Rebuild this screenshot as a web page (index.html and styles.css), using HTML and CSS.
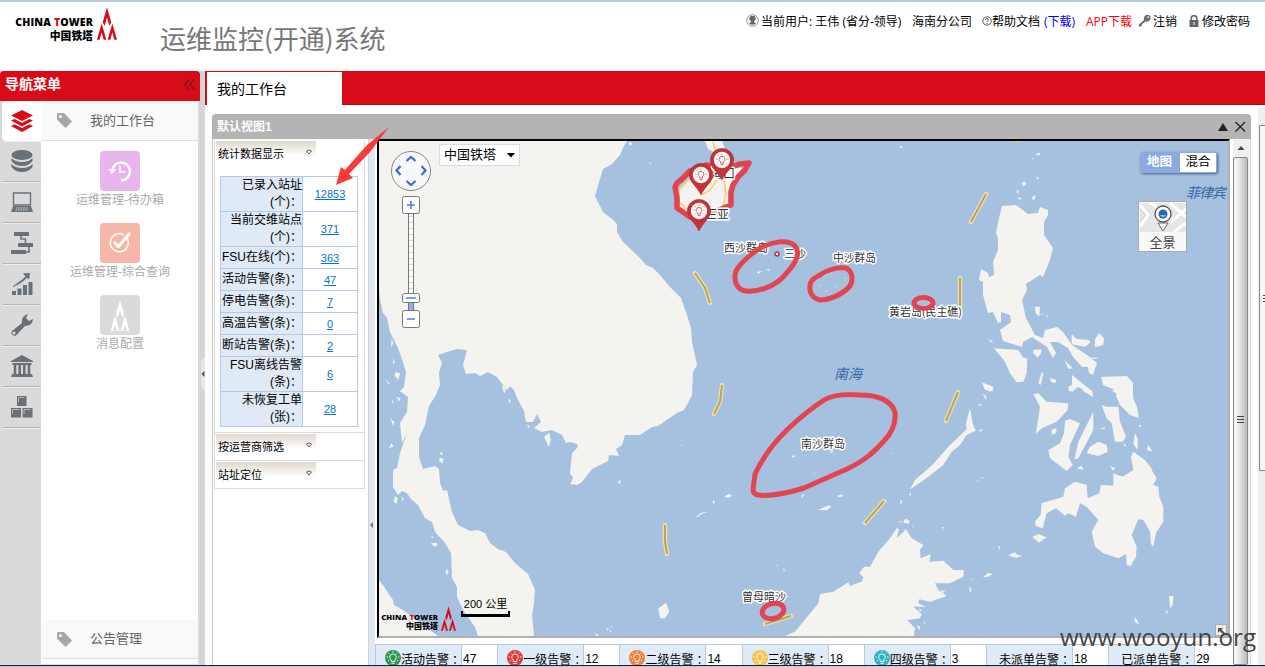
FILE: index.html
```html
<!DOCTYPE html>
<html lang="zh-CN">
<head>
<meta charset="utf-8">
<title>运维监控(开通)系统</title>
<link rel="stylesheet" href="styles.css">
</head>
<body>
<svg class="defs" width="0" height="0">
  <symbol id="tower" viewBox="0 0 60 98"><path d="M30 0 43 46 37 56 30 30 23 56 17 46ZM14 49 28 98H20L14 76 8 98H0ZM46 49 60 98H52L46 76 40 98H32Z"/></symbol>
  <symbol id="tag" viewBox="0 0 15 15"><path fill-rule="evenodd" d="M0 1.500Q0 0 1.500 0H7L15 8.500 8.500 15 0 6.500ZM3.500 2A1.500 1.500 0 1 0 3.500 5 1.500 1.500 0 0 0 3.500 2"/></symbol>
  <symbol id="bulb" viewBox="0 0 16 16"><g fill="none" stroke="currentColor" stroke-width=".9"><path d="M6.300 11.500V10Q4.700 8.800 4.700 7.200A3.300 3.300 0 0 1 11.300 7.200Q11.300 8.800 9.700 10V11.500ZM6.300 13.300H9.700"/><path d="M8 1V2.500M3.200 2.700 4.200 3.700M12.800 2.700 11.800 3.700M1.500 7H3M13 7H14.500M3 11 4 10.200M13 11 12 10.200"/></g></symbol>
  <symbol id="chev" viewBox="0 0 6 6"><path d="M.5 2Q3 0 5.500 2L3 5Z" fill="#fff" stroke="#333" stroke-width=".8"/></symbol>
  <symbol id="pin" viewBox="0 0 24 32"><path d="M12 32Q10.500 28 2.800 19A11.600 11.600 0 0 1 .4 12 11.600 11.600 0 0 1 23.600 12 11.600 11.600 0 0 1 21.200 19Q13.500 28 12 32" fill="#c83236" stroke="#a92529" stroke-width=".6"/><circle cx="12" cy="12" r="8.200" fill="#fff"/><use href="#bulb" x="5" y="5" width="14" height="14" color="#d33"/></symbol>
</svg>

<header class="top">
  <div class="logo">
    <div class="logo-text"><b class="logo-en">CHINA <i>T</i>OWER</b><b class="logo-cn">中国铁塔</b></div>
    <svg class="logo-mark"><use href="#tower"/></svg>
  </div>
  <h1 class="sys">运维监控(开通)系统</h1>
  <nav class="usernav">
    <svg width="13" height="13" viewBox="0 0 13 13"><circle cx="6.500" cy="6.500" r="5.800" fill="#fff" stroke="#8b9093"/><path d="M6.500 2A2.300 2.500 0 0 0 5 7V8L3 9.200Q6.500 12.500 10 9.200L8 8V7A2.300 2.500 0 0 0 6.500 2" fill="#60686c"/></svg>
    <span>当前用户: 王伟 (省分-领导)</span>
    <span>海南分公司</span>
    <svg width="10" height="10" viewBox="0 0 10 10"><circle cx="5" cy="5" r="4.200" fill="none" stroke="#555"/><path d="M3.500 4Q3.500 2.500 5 2.500T6.400 4Q6.400 4.600 5 5.400V6M5 7V8" fill="none" stroke="#555"/></svg>
    <span>帮助文档</span>
    <span class="blue">(下载)</span>
    <span class="red">APP下载</span>
    <svg width="13" height="13" viewBox="0 0 13 13"><path fill-rule="evenodd" d="M1 10.500 6 6Q5.200 3 7.500 1.200 10 -.2 12.200 2 13.500 5 11 7 9 8.200 7.300 7.500L6 9H5V10H4V11.500L2 12.800 .5 12ZM9.500 2.500V4H11V2.500Z" fill="#6c7174"/></svg>
    <span>注销</span>
    <svg width="10" height="12" viewBox="0 0 10 12"><path d="M2.200 6V3.500A2.800 2.800 0 0 1 7.800 3.500V6" fill="none" stroke="#5f686d" stroke-width="1.500"/><path fill-rule="evenodd" d="M.5 5H9.500V12H.5ZM4.500 7V10H5.500V7Z" fill="#5f686d"/></svg>
    <span>修改密码</span>
  </nav>
</header>

<div class="work">
  <aside class="side">
    <div class="side-title"><b>导航菜单</b><svg width="11" height="11" viewBox="0 0 11 11"><path d="M5.500 .5 .8 5.500 5.500 10.500M10.500 .5 5.800 5.500 10.500 10.500" fill="none" stroke="#6c1c20" stroke-width="1.100"/></svg></div>
    <div class="side-body">
      <ul class="rail">
        <li class="on"><svg viewBox="0 0 22 22"><path fill="#d80c18" d="M11 0 22 5.500 11 11 0 5.500ZM0 10.500 3.500 9 11 12.800 18.500 9 22 10.500 11 16.500ZM0 16 3.500 14.200 11 18 18.500 14.200 22 16 11 22Z"/></svg></li>
        <li><svg viewBox="0 0 22 22"><g fill="#687177"><ellipse cx="11" cy="5" rx="10.500" ry="5"/><path d="M.5 8Q4 12 11 12T21.500 8V11Q18 16 11 16T.5 11ZM.5 14Q4 18 11 18T21.500 14V17Q18 22 11 22T.5 17Z"/></g></svg></li>
        <li><svg viewBox="0 0 22 22"><path d="M2.500 2H19.500V14H2.500Z" fill="#dadada" stroke="#687177" stroke-width="1.400"/><path d="M2 15H20L22 21H0Z" fill="#687177"/><path d="M5 17H17M4.500 19H17.500" stroke="#dadada" stroke-dasharray="1.500 1"/></svg></li>
        <li><svg viewBox="0 0 22 22"><g fill="#687177"><rect x="3" width="15" height="4" rx=".5"/><rect x="7" y="11" width="15" height="4" rx=".5"/><rect y="18" width="15" height="4" rx=".5"/></g><path d="M10 4V7H14.500V11M18 15V20H14" fill="none" stroke="#687177" stroke-width="1.500"/></svg></li>
        <li><svg viewBox="0 0 22 22"><path fill="#687177" d="M1 18H5V22H1ZM6.500 15.500H10.500V22H6.500ZM12 12H16V22H12ZM17.500 9H21.500V22H17.500ZM2 13Q10 8 14.500 3.500L12 .5 19 0 18 6.500 16 4.800Q10 11 2 14Z"/></svg></li>
        <li><svg viewBox="0 0 22 22"><path fill="#687177" fill-rule="evenodd" d="M1 17 11 9Q10 2 17 0L15 4 18 7 22 5Q21.500 12 14 12L5 21.500Q2 22.500 .5 20 .3 18 1 17M3 17.500A1.500 1.500 0 1 0 3 20.500 1.500 1.500 0 0 0 3 17.500"/></svg></li>
        <li><svg viewBox="0 0 22 22"><path fill="#687177" d="M0 6 11 0 22 6V7H0ZM1.500 8H20.500V10H1.500ZM1 19H21L22 22H0Z"/><path d="M4 10V19M8.700 10V19M13.300 10V19M18 10V19" stroke="#687177" stroke-width="2.600"/></svg></li>
        <li><svg viewBox="0 0 22 22"><path fill="#687177" d="M6 0H15.500V10H6ZM0 12H10V21.500H0ZM11.500 12H21.500V21.500H11.500Z"/><path fill="none" stroke="#b3b9bc" d="M7.500 6V1.500H13.500M1.500 18V13.500H8M13 18V13.500H19.500"/></svg></li>
      </ul>
      <div class="menu">
        <div class="menu-head"><svg><use href="#tag"/></svg><span>我的工作台</span></div>
        <div class="menu-items">
          <a><svg class="tile violet" viewBox="0 0 40 40"><path d="M12 21A9 9 0 1 1 21 29.500" fill="none" stroke="#fff" stroke-width="2.400"/><path d="M8.500 18H16L12 23Z" fill="#fff"/><path d="M20 15V21H25" fill="none" stroke="#fff" stroke-width="1.600"/></svg><span>运维管理-待办箱</span></a>
          <a><svg class="tile salmon" viewBox="0 0 40 40"><path d="M27 15A9 9 0 1 1 24 12" fill="none" stroke="#fff" stroke-width="1.500"/><path d="M14 19 18.500 23.500 30 10" fill="none" stroke="#fff" stroke-width="3"/></svg><span>运维管理-综合查询</span></a>
          <a><svg class="tile gray" viewBox="0 0 40 40"><use href="#tower" x="10" y="5" width="20" height="31" fill="#fff"/></svg><span>消息配置</span></a>
        </div>
        <div class="menu-head foot"><svg><use href="#tag"/></svg><span>公告管理</span></div>
      </div>
    </div>
  </aside>
  <div class="split"><svg width="4" height="34" viewBox="0 0 4 34"><path d="M4 0 0 4V30L4 34Z" fill="#e6e6e6"/><path d="M3.500 14 .5 17 3.500 20Z" fill="#555"/></svg></div>

  <main class="content">
    <div class="tabs"><div class="tab">我的工作台</div></div>
    <div class="stage">
      <section class="panel">
        <div class="panel-head"><b>默认视图1</b><svg width="28" height="11" viewBox="0 0 28 11"><path d="M0 10 5 2 10 10Z" fill="#222"/><path d="M17.500 1 27 10.500M27 1 17.500 10.500" stroke="#222" stroke-width="1.300"/></svg></div>
        <div class="panel-body">
          <div class="stats">
            <div class="acc first"><div class="acc-head"><span>统计数据显示</span><svg><use href="#chev"/></svg></div>
              <table>
                <tr class="tall"><th>已录入站址<br>(个)<i>：</i></th><td><a>12853</a></td></tr>
                <tr class="tall"><th>当前交维站点<br>(个)<i>：</i></th><td><a>371</a></td></tr>
                <tr><th>FSU在线(个)<i>：</i></th><td><a>363</a></td></tr>
                <tr><th>活动告警(条)<i>：</i></th><td><a>47</a></td></tr>
                <tr><th>停电告警(条)<i>：</i></th><td><a>7</a></td></tr>
                <tr><th>高温告警(条)<i>：</i></th><td><a>0</a></td></tr>
                <tr><th>断站告警(条)<i>：</i></th><td><a>2</a></td></tr>
                <tr class="tall"><th>FSU离线告警<br>(条)<i>：</i></th><td><a>6</a></td></tr>
                <tr class="tall"><th>未恢复工单<br>(张)<i>：</i></th><td><a>28</a></td></tr>
              </table>
            </div>
            <div class="acc"><div class="acc-head"><span>按运营商筛选</span><svg><use href="#chev"/></svg></div></div>
            <div class="acc"><div class="acc-head"><span>站址定位</span><svg><use href="#chev"/></svg></div></div>
          </div>
          <div class="gutter"><svg width="5" height="8" viewBox="0 0 5 8"><path d="M4 1 1 4 4 7Z" fill="#777"/></svg></div>
          <div class="mapcol">
            <div class="map">
              <svg class="canvas" width="848" height="495" viewBox="379 141 848 495">
                <g class="land">
                  <path d="M379 141H627L623 148 620 155 612 164 603 169 599 182 595 196 603 212 612 219 617 224V232L623 242 640 258 646 265 653 268 659 274 670 287 681 298 687 315 691 328 692 342 697 365 693 372 692 395 688 403 684 410 677 413 658 426 652 427 640 435H625L622 445 616 449 619 456 609 455 608 461 592 469 582 482 577 485 570 484 573 478 570 473 572 453 578 447 577 444 570 442 566 443 562 435 552 430 542 432 534 428 541 422 537 414 533 422H526L524 411 518 400 514 390 510 386 507 390 497 377 488 372 480 376 475 373 466 374 463 365 467 350 457 349 447 352 438 355 442 363 439 373 440 385 436 395 429 406 425 425 419 438V457L423 469 435 466 439 469 440 483 443 491 447 490 452 512 458 525 470 531 478 530 485 533 490 543 498 549 506 552 515 563 528 574 535 590 534 603 532 615 534 636H478L475 627 463 610 457 597V587L452 578 451 553 445 543 435 532 432 522 425 518 418 505 411 499 407 493 402 491 398 495 393 487V470L397 468 400 453 407 433 402 443 400 423 407 412 408 397 400 391 404 387 406 372 403 362 398 348 393 338 390 332 387 318 383 313 380 300 379 287Z"/>
                  <path d="M379 580 385 588 388 593 393 600 394 605 403 610 438 636H379ZM705 141 708 149 718 154H727L722 141Z"/>
                  <path d="M1002 206 1016 205 1028 214 1038 213 1040 207 1048 210V215L1044 222V235L1053 248 1050 260 1043 277 1040 275 1026 284 1027 290 1022 300 1026 318 1035 335 1043 338 1045 330 1057 327 1063 332 1072 345 1087 355 1097 363 1093 375 1089 373 1088 367H1082L1073 357 1068 348 1058 342H1050L1056 353 1053 358 1047 347 1032 337 1023 342 1022 347 1003 341 1000 330 1011 322 1010 315 1001 312V322L998 323 993 312 988 313 983 295V282L979 280 981 269 988 273 989 277 994 275 993 262 998 250V238L996 233 999 218Z"/>
                  <path d="M1101 377 1127 376 1133 383V398L1137 407 1139 418 1130 415 1120 405 1116 396 1118 391 1103 385ZM1072 375 1093 392 1090 393 1078 387 1072 392Z"/>
                  <g transform="translate(375 135) scale(.33333)"><path d="M765 20 772 25 767 32 760 26ZM823 82 829 85 825 88ZM50 610 55 625 48 638ZM55 670 60 685 54 685ZM62 710 75 715 70 735 58 722ZM30 730 45 747 40 747ZM380 750 392 760 388 775ZM1147 410 1163 408 1148 417ZM1173 402 1187 404 1180 408Z"/></g>
                  <g transform="translate(770 135) scale(.33333)"><path d="M385 38 396 32V38ZM792 20 799 25ZM795 60 808 52 810 60ZM787 70 792 70 790 76ZM755 145 763 139 769 147 760 154ZM798 126 807 129 803 134ZM740 163 747 170 741 176ZM742 188H755L750 195ZM790 182 798 182 792 196 785 190ZM795 515 810 515 808 545 797 535ZM813 535 820 540H815ZM827 540 837 545H830ZM655 610 670 622 662 622ZM905 598 920 612 957 615 962 622 945 635 905 628ZM988 595 1002 610 1000 630 975 637V612ZM672 640 745 645 760 668 772 670 770 715 760 740 740 742 720 715 705 680ZM790 645 815 643 813 655 803 668 790 655ZM883 675 908 700 895 702ZM815 712 820 715 812 750 805 745ZM840 728 860 735 855 745 842 740ZM635 742 670 755 668 768 645 764ZM895 755 905 750 908 765 897 770ZM940 667 985 668 978 672Z"/></g>
                  <g transform="translate(375 390) scale(.33333)"><path d="M65 20 77 25 72 35ZM50 25 56 40 52 40ZM45 85 58 95 55 108ZM50 160 55 170 42 175ZM195 185 206 192 198 196ZM195 203 206 207 202 220 192 212ZM60 318 68 325 65 342 56 335ZM80 318 87 330 82 333ZM170 438 175 442 170 447ZM168 460 185 458 188 465 178 470ZM215 537 221 545 216 555 211 547ZM507 140 523 128 527 150 522 172ZM400 25 408 35 402 38ZM383 0 393 0 388 8ZM456 105 464 107 461 115ZM728 275 738 270 735 282ZM917 165 923 165 921 168ZM1047 320 1062 311 1071 317 1060 323ZM1013 330 1020 335 1015 345ZM963 384Q975 363 1000 366 980 368 968 382ZM850 655 873 638 883 665 868 686 855 684ZM695 715 702 717 697 722ZM708 708 713 710 710 714ZM704 720 710 724 706 728ZM662 730 673 738H662Z"/></g>
                  <g transform="translate(770 390) scale(.33333)"><path d="M45 738 75 725 145 640 150 612 190 605 235 577 240 588 275 575 280 562 268 550 282 530 300 530 325 485 360 445 380 415 387 417 380 445 408 418 425 445 460 465 450 480 452 505 483 492 478 515 520 512 550 540 582 540 580 560 540 580 495 580 505 600 530 618 480 635 448 628 445 640 468 650 430 650 455 672 450 685 412 690 435 715 432 738ZM600 55 608 100 617 122 590 135 570 165 545 185 520 225 475 260 440 285 420 298 435 270 490 222 540 165 590 118 588 100Z"/>
                  <path d="M790 12 805 10 830 35 895 40 893 60 860 95 815 115 797 133 805 85 810 50ZM885 92 900 87 930 100 900 165 895 200 908 225 890 243 840 205 835 180 870 160 882 130ZM970 65V120L925 205 913 208 925 155ZM985 155 1010 165 1013 185 985 198 950 190 960 170ZM995 45 1010 50 1045 50 1050 95 1068 140 1058 155 1035 155 1025 100 1010 85ZM845 118 860 115 858 128 845 135ZM1095 130 1103 145 1103 180 1090 162ZM1135 165 1147 185 1130 180ZM1020 228 1035 235 1030 242ZM920 235 935 227 940 240ZM1105 105 1115 106 1110 112ZM1060 160 1068 165 1065 172ZM990 115 1005 112 1003 118Z"/>
                  <path d="M1090 185 1125 210 1145 235 1145 240 1160 265 1150 285 1165 290 1168 320 1180 350 1180 395 1158 428 1150 470 1143 462 1140 425 1120 390 1105 388 1085 435 1100 470 1098 500 1082 528 1070 525 1068 492 1045 505 1000 490 975 470 965 425 985 390 950 350 930 340 918 380 895 370 885 377 858 355 830 370 818 415 797 408 795 395 812 375 815 340 880 320 885 295 915 275 950 285 953 325 988 310 992 285 1030 287 1030 250 1058 260 1090 240 1083 200ZM787 440 805 432 830 442 807 458Z"/>
                  <path d="M715 495 735 487 743 495 757 497 740 503 725 500ZM685 472 692 466 687 480ZM633 567 655 548 668 552 655 560 640 562ZM597 587 605 600 600 608ZM603 566 609 566 606 570ZM515 413 522 411 523 417ZM620 273 626 270 623 276ZM633 263 642 260 636 266ZM397 330 393 345 390 340 393 330ZM400 393 408 386 420 393 415 401 402 398ZM387 395 396 393 394 398ZM417 315 423 308 423 317ZM638 10 650 20 647 30ZM622 45 636 40 630 48ZM625 120 640 118 632 125ZM650 0H670L660 5ZM1025 0H1050V20ZM935 0H965L970 22ZM900 0 910 0 905 5ZM1197 618 1210 618 1208 645 1200 656ZM1186 658 1195 668 1190 672ZM1092 682 1100 688 1107 703 1095 697ZM143 360 175 346 185 350 170 361ZM202 318 215 313 221 319 205 322ZM95 315 105 312 95 325ZM65 198 77 196 70 204ZM180 185 195 182 182 190ZM130 250 135 248 133 252ZM361 188 368 189 364 191ZM440 705 452 712 447 720ZM430 405 432 414 428 410ZM18 525 23 528H18ZM38 535 45 540 42 545ZM510 600 525 603 520 610ZM448 655 456 662 448 664ZM462 695 467 697 462 702Z"/></g>
                </g>
                <path class="land" d="M676 194 681 186 692 175 705 168 728 168 742 168 738 177 729 193 728 203 718 209 705 213 690 215 680 208Z"/>
                <g fill="none" stroke="#fac74f" stroke-width="1.300"><path d="M679 190 689 179 701 170 723 169M679 190V202L689 211 704 214 722 209 726 195 724 178M713 141 716 155M702 195 710 190 719 177M1015 141.500H1019"/></g>
                <path d="M675 187 677 183 682 179 690 171 698 169 706 165 730 168 739 164 749 163 745 170 738 177 733 185 731 192 731 205 719 210 706 217 690 217 683 212 677 208 677 198Z" fill="none" stroke="#e04450" stroke-width="5.500" stroke-linejoin="round"/>
                <g fill="none" stroke="#efe1a2" stroke-width="4.400" stroke-linecap="round"><path id="dash" d="M695 273 705 288 710 303M722 385 720 402 714 414M665 525 665 541 667 554M765 624 791 616M865 523 884 501M946 421 958 392M960 278V306M971 222 986 194"/></g>
                <g fill="none" stroke="#b7a365" stroke-width="2"><use href="#dash"/></g>
                <g class="places"><text x="724" y="252" textLength="44">西沙群岛</text><text x="784" y="258" textLength="22">三沙</text><text x="833" y="262" textLength="43">中沙群岛</text><text x="889" y="316" textLength="73">黄岩岛(民主礁)</text><text x="801" y="448" textLength="44">南沙群岛</text><text x="742" y="601" textLength="44">曾母暗沙</text><text x="711" y="178" textLength="24" class="city">海口</text><text x="706" y="219" textLength="23" class="city">三亚</text></g>
                <g class="seas"><text x="834" y="379" textLength="28">南海</text><text x="1186" y="198" textLength="40">菲律宾</text></g>
                <g fill="#f5faff"><circle cx="818" cy="280" r=".6"/><circle cx="824" cy="276" r=".6"/><circle cx="831" cy="273" r=".6"/><circle cx="838" cy="272" r=".6"/><circle cx="845" cy="278" r=".6"/><circle cx="837" cy="287" r=".6"/><circle cx="826" cy="291" r=".6"/><circle cx="820" cy="286" r=".6"/></g>
                <g class="rings"><path d="M762 247C772 242 787 239 794 245 801 252 798 261 784 276 773 288 757 292 746 291 737 290 733 281 736 271 741 262 753 252 762 247Z"/><path d="M820 275C828 269 839 267 846 268 852 271 854 279 850 286 842 295 829 300 820 300 811 298 808 290 811 282 813 278 816 277 820 275Z"/><ellipse cx="923.500" cy="303" rx="9.500" ry="5.500"/><path d="M824 400C832 395 846 394 860 395 875 395 891 399 895 412 896 421 894 431 883 442 873 453 864 461 847 469L804 488C791 492 773 497 758 495 750 494 754 486 755 474 763 457 776 440 790 427 804 414 815 406 824 400Z"/><ellipse cx="773" cy="611" rx="11" ry="7.500" transform="rotate(-15 773 611)"/></g>
                <circle cx="777" cy="254" r="2" fill="#fff" stroke="#c9333d" stroke-width="1.500"/>
                <use href="#pin" x="710" y="148" width="24" height="32"/><use href="#pin" x="689" y="163" width="24" height="32"/><use href="#pin" x="687" y="199" width="24" height="32"/>
              </svg>
              <svg class="zoomer" width="44" height="184" viewBox="389 149 44 184">
                <circle cx="411" cy="171" r="19.500" fill="#f8f8f8" stroke="#85878a"/>
                <g fill="none" stroke="#3c6cd0" stroke-width="2.200"><path d="M406.500 161 411 157 415.500 161M406.500 181 411 185 415.500 181M400.500 166 396.500 170.500 400.500 175M421.500 166 425.500 170.500 421.500 175"/></g>
                <path d="M408.500 213V311M413.500 213V311" stroke="#777"/><path d="M411 213V293" stroke="#fff" stroke-width="4"/><path d="M411 216V293" stroke="#d5d5d5" stroke-width="4" stroke-dasharray="1 5"/><path d="M411 302V311" stroke="#93aff3" stroke-width="4"/>
                <g fill="#fff" stroke="#777"><rect x="402.500" y="196.500" width="17" height="17" rx="2"/><rect x="402.500" y="293.500" width="17" height="9" rx="2"/><rect x="402.500" y="310.500" width="17" height="17" rx="2"/></g>
                <path d="M407 205H415M411 201V209M406 298H416M407 319H415" stroke="#4f80e6" stroke-width="1.700"/>
              </svg>
              <div class="region">中国铁塔<svg width="8" height="5" viewBox="0 0 8 5"><path d="M0 0H8L4 4.500Z"/></svg></div>
              <div class="types"><b>地图</b><span>混合</span></div>
              <div class="pano"><svg width="46" height="29" viewBox="0 0 46 29"><path fill="#e6e6e6" d="M0 0H46V29H0Z"/><path d="M0 2 8 12 0 24M10 0 17 4M30 0 46 14M30 20 46 6M34 29 46 20" fill="none" stroke="#fff" stroke-width="3"/><path d="M0 6 6 12 0 18" fill="none" stroke="#ccc"/><path d="M18 20 23 28 28 20Z" fill="#fff" stroke="#666"/><circle cx="23" cy="11" r="8" fill="#fff" stroke="#555" stroke-width="1.300"/><circle cx="23" cy="11" r="4.500" fill="#2b66b5"/><path d="M20 12A3.200 3 0 0 0 26 12Z" fill="#85c4f2"/></svg><span>全景</span></div>
              <div class="logo mini"><div class="logo-text"><b class="logo-en">CHINA <i>T</i>OWER</b><b class="logo-cn">中国铁塔</b></div><svg class="logo-mark"><use href="#tower"/></svg></div>
              <div class="scale">200 公里</div>
              <div class="corner"><svg width="7" height="7" viewBox="0 0 7 7"><path d="M0 0H5L3.500 1.500 7 5 5.500 6.500 1.500 3 0 5Z" fill="#555"/></svg></div>
            </div>
            <div class="alarms">
              <div class="lab"><svg class="c0"><use href="#bulb"/></svg>活动告警<i>：</i></div><div class="num">47</div>
              <div class="lab"><svg class="c1"><use href="#bulb"/></svg>一级告警<i>：</i></div><div class="num">12</div>
              <div class="lab"><svg class="c2"><use href="#bulb"/></svg>二级告警<i>：</i></div><div class="num">14</div>
              <div class="lab"><svg class="c3"><use href="#bulb"/></svg>三级告警<i>：</i></div><div class="num">18</div>
              <div class="lab"><svg class="c4"><use href="#bulb"/></svg>四级告警<i>：</i></div><div class="num">3</div>
              <div class="lab plain">未派单告警<i>：</i></div><div class="num">18</div>
              <div class="lab plain">已派单告警<i>：</i></div><div class="num">29</div>
            </div>
          </div>
          <div class="vbar"><svg width="17" height="16" viewBox="0 0 17 16"><path d="M4.500 11 8 7 11.500 11Z" fill="#444"/></svg><div class="thumb"></div></div>
        </div>
      </section>
      <div class="outerbar"><div class="outerthumb"></div></div>
    </div>
  </main>
</div>
<footer class="edge"></footer>
<svg class="arrow" width="56" height="62" viewBox="335 125 56 62"><path d="M389 127 370 152 349 174 353 178 336 185 341 167 345 170 367 145Z" fill="#f63b38"/></svg>
<div class="mark">www.wooyun.org</div>
</body>
</html>
```

FILE: styles.css
```css
* { box-sizing: border-box; }
body { margin: 0; width: 1265px; height: 667px; overflow: hidden; display: flex; flex-direction: column; position: relative; background: #fff; color: #000; font: 12px/16px "Liberation Sans", "Noto Sans CJK SC", sans-serif; }
svg { display: block; flex: none; }
.defs { position: absolute; }
ul, h1 { margin: 0; padding: 0; font-weight: normal; }

.top { height: 71px; flex: none; display: flex; align-items: flex-start; border-top: 2px solid #b4cce0; }
.logo { display: flex; padding: 5px 0 0 15px; width: 160px; gap: 4px; }
.logo-text { display: flex; flex-direction: column; align-items: flex-end; width: 78px; padding-top: 9px; white-space: nowrap; }
.logo-en { font: 800 10.500px/13px "Open Sans", sans-serif; letter-spacing: .15px; }
.logo-en i { font-style: normal; color: #d80c18; }
.logo-cn { font: 900 10.800px/12px "Noto Sans CJK SC", sans-serif; }
.logo-mark { width: 20px; height: 33px; fill: #d80c18; }
.sys { flex: 1; padding-top: 17px; color: #777; font: 26px/38px "Noto Sans CJK SC", sans-serif; font-weight: 400; white-space: nowrap; }
.usernav { display: grid; grid-template-columns: 15px 151px 70px 10px 52px 42px 52px 15px 36px 13px 63px; align-items: center; padding-top: 10px; height: 29px; white-space: nowrap; font-family: "Open Sans", "Noto Sans CJK SC", sans-serif; }
.usernav svg { margin-bottom: 2px; }
.blue { color: #00f; }
.red { color: #f00; }

.work { height: 594px; flex: none; display: flex; }
.side { width: 200px; display: flex; flex-direction: column; background: #dadada; }
.side-title { height: 30px; flex: none; display: flex; justify-content: space-between; align-items: center; padding: 0 5px 4px; background: #d80c18; color: #fff; border-radius: 4px 4px 0 0; font-size: 14px; }
.side-body { flex: 1; display: flex; padding: 0 2px 1px; }
.rail { width: 39px; list-style: none; }
.rail li { height: 41px; display: flex; align-items: center; justify-content: center; border-bottom: 1px solid #b5b5b5; box-shadow: 0 1px #eee; }
.rail li svg { width: 22px; height: 22px; }
.rail .on { height: 40px; border: 0; background: #fff; border-radius: 5px 0 0 5px; }
.menu { flex: 1; display: flex; flex-direction: column; background: #fff; padding-left: 1px; }
.menu-head { height: 40px; display: flex; align-items: center; gap: 18px; padding-left: 15px; background: #f9f9f9; border-bottom: 1px solid #ddd; color: #666; font-size: 13px; }
.menu-head svg { width: 15px; height: 15px; fill: #a4a8aa; }
.menu-items { flex: 1; display: flex; flex-direction: column; align-items: center; gap: 16px; padding-top: 10px; color: #aaa; }
.menu-items a { display: flex; flex-direction: column; align-items: center; height: 56px; }
.menu-items span { line-height: 18px; }
.tile { width: 40px; height: 40px; border-radius: 4px; }
.violet { background: #e8b6ec; }
.salmon { background: #f6b7a9; }
.gray { background: #dadada; }
.foot { margin-bottom: 5px; height: 39px; }
.split { width: 5px; background: #d5d5d5; padding: 286px 0 0 1px; }

.content { flex: 1; display: flex; flex-direction: column; }
.tabs { height: 34px; flex: none; background: #d80c18; border-bottom: 1px solid #b90812; padding: 1px 0 0 2px; }
.tab { width: 135px; height: 33px; background: #fff; padding: 8px 10px; font-size: 14px; line-height: 18px; }
.stage { flex: 1; min-height: 0; display: flex; justify-content: space-between; padding: 9px 0 0 7px; }
.panel { width: 1039px; display: flex; flex-direction: column; }
.panel-head { height: 25px; flex: none; display: flex; justify-content: space-between; align-items: center; padding: 0 5px; color: #fff; background: #b4b4b4; border-radius: 4px 4px 0 0; }
.panel-body { flex: 1; min-height: 0; display: flex; border-left: 1px solid #ccc8bf; border-right: 1px solid #ddd; }
.stats { width: 156px; padding: 1px 3px 0 1px; border-right: 1px solid #d5d0c8; }
.acc { height: 28px; padding: 1px 0 0 1px; border: 1px solid #dcdcdc; border-top: 0; }
.acc.first { height: 293px; }
.acc-head { width: 100px; height: 23px; display: flex; justify-content: space-between; padding: 5px 4px 0 2px; background: linear-gradient(#dfd8ce, #fff 65%); font-size: 11px; line-height: 16px; }
.acc-head svg { width: 6px; height: 6px; margin-top: 3px; }
table { width: 138px; margin: 12px 0 0 4px; border-collapse: collapse; table-layout: fixed; }
th, td { height: 22px; padding: 0; border: 1px solid #b6c9e4; font-weight: normal; }
th { width: 82px; text-align: right; white-space: nowrap; line-height: 17px; background: #dfeaf6; }
th i, .lab i { font-style: normal; font-family: "Noto Sans CJK TC", sans-serif; line-height: 1; }
td { text-align: center; font-size: 11px; }
td a { color: #0873c8; text-decoration: underline; }
.tall th { height: 35px; }
.gutter { width: 6px; flex: none; background: #dfe7f5; padding-top: 382px; }
.mapcol { width: 858px; flex: none; display: flex; flex-direction: column; padding-left: 2px; }
.map { width: 853px; height: 499px; flex: none; position: relative; border: 2px solid #b0b0b0; border-top-color: #000; border-left-color: #000; background: #a6c1df; overflow: hidden; }
.land { fill: #f4f3ef; }
.places { font: 11px "Noto Sans CJK SC", sans-serif; fill: #333; stroke: #fff; stroke-width: 3px; paint-order: stroke; stroke-linejoin: round; }
.city { font-size: 12px; }
.seas { font: italic 14px "Noto Sans CJK SC", sans-serif; fill: #35679f; }
.rings { fill: none; stroke: #e24550; stroke-width: 5px; }
.zoomer { position: absolute; left: 10px; top: 8px; }
.region { position: absolute; left: 60px; top: 3px; width: 81px; height: 22px; display: flex; align-items: center; justify-content: space-between; padding: 0 4px; border: 1px solid #d6dde7; background: #fff; font-size: 13px; }
.types { position: absolute; left: 761px; top: 11px; width: 77px; height: 21px; display: flex; background: #8ea8e0; color: #fff; border-radius: 3px; box-shadow: 1px 1px 3px #4b5e80; font-size: 12.500px; line-height: 20px; text-align: center; }
.types b { width: 39px; }
.types span { flex: 1; margin: 1px; background: #fff; color: #000; line-height: 18px; }
.pano { position: absolute; left: 759px; top: 60px; width: 49px; height: 51px; display: flex; flex-direction: column; align-items: center; border: 1px solid #aaa; background: #f8f8f8; padding-top: 1px; color: #444; font-size: 13px; line-height: 21px; }
.logo.mini { position: absolute; left: 1px; top: 465px; width: 80px; padding: 0; gap: 3px; }
.mini .logo-text { width: 58px; padding-top: 7px; }
.mini .logo-en { font-size: 7.700px; line-height: 9px; letter-spacing: .1px; }
.mini .logo-cn { font-size: 8px; line-height: 8px; }
.mini .logo-mark { width: 15px; height: 25px; }
.scale { position: absolute; left: 82px; top: 455px; width: 49px; height: 21px; border: solid #000; border-width: 0 2px 3px; border-image: linear-gradient(transparent 72%, #000 72%) 0 2 3 2; text-align: center; white-space: nowrap; font-size: 11px; }
.corner { position: absolute; left: 836px; top: 483px; width: 12px; height: 12px; padding: 3px 2px; background: #eee; border: 1px solid #aaa; }
.alarms { display: grid; grid-template-columns: repeat(7, 86px 36.200px); width: 857px; height: 27px; margin: 6px 0 0 -2px; border-top: 1px solid #b6c9e4; font-size: 12px; }
.lab { display: flex; height: 27px; border-left: 1px solid #b6c9e4; background: #dfebf6; padding-left: 9px; line-height: 30px; white-space: nowrap; overflow: hidden; }
.lab i { line-height: 30px; }
.lab svg { width: 16px; height: 16px; margin-top: 5px; border-radius: 50%; color: #fff; }
.c0 { background: #2d9651; }
.c1 { background: #e03b3f; }
.c2 { background: #f0803a; }
.c3 { background: #f8c04d; }
.c4 { background: #2cb5bd; }
.lab.plain { padding-left: 12px; }
.num { border-left: 1px solid #b6c9e4; line-height: 29px; padding-left: 1px; background: #fff; }
.vbar { width: 17px; flex: none; display: flex; flex-direction: column; background: #f0f0f0; }
.thumb { width: 15px; height: 560px; margin: 2px 0 0; border: 1px solid #888; border-radius: 2px; background-image: repeating-linear-gradient(#444 0 1px, transparent 1px 3px), linear-gradient(90deg, #f5f5f5 20%, #bcbcc0); background-size: 7px 8px, 100% 100%; background-position: 3px 258px, 0 0; background-repeat: no-repeat; }
.outerbar { width: 7px; margin-top: -7px; background: #eee; padding: 18px 0 0 1px; }
.outerthumb { height: 346px; border: 1px solid #888; border-right: 0; border-radius: 2px 0 0 2px; background: linear-gradient(#444, #444) 3px 169px / 3px 1px no-repeat, linear-gradient(#444, #444) 3px 172px / 3px 1px no-repeat, linear-gradient(#444, #444) 3px 175px / 3px 1px no-repeat, #f7f7f7; }
.edge { height: 2px; flex: none; background: #b9c9d8; border-top: 1px solid #1c2430; }
.arrow { position: absolute; left: 335px; top: 125px; }
.mark { position: absolute; left: 1060px; top: 621px; color: #444; font: 24.200px/32px "Open Sans", sans-serif; white-space: nowrap; }
```
